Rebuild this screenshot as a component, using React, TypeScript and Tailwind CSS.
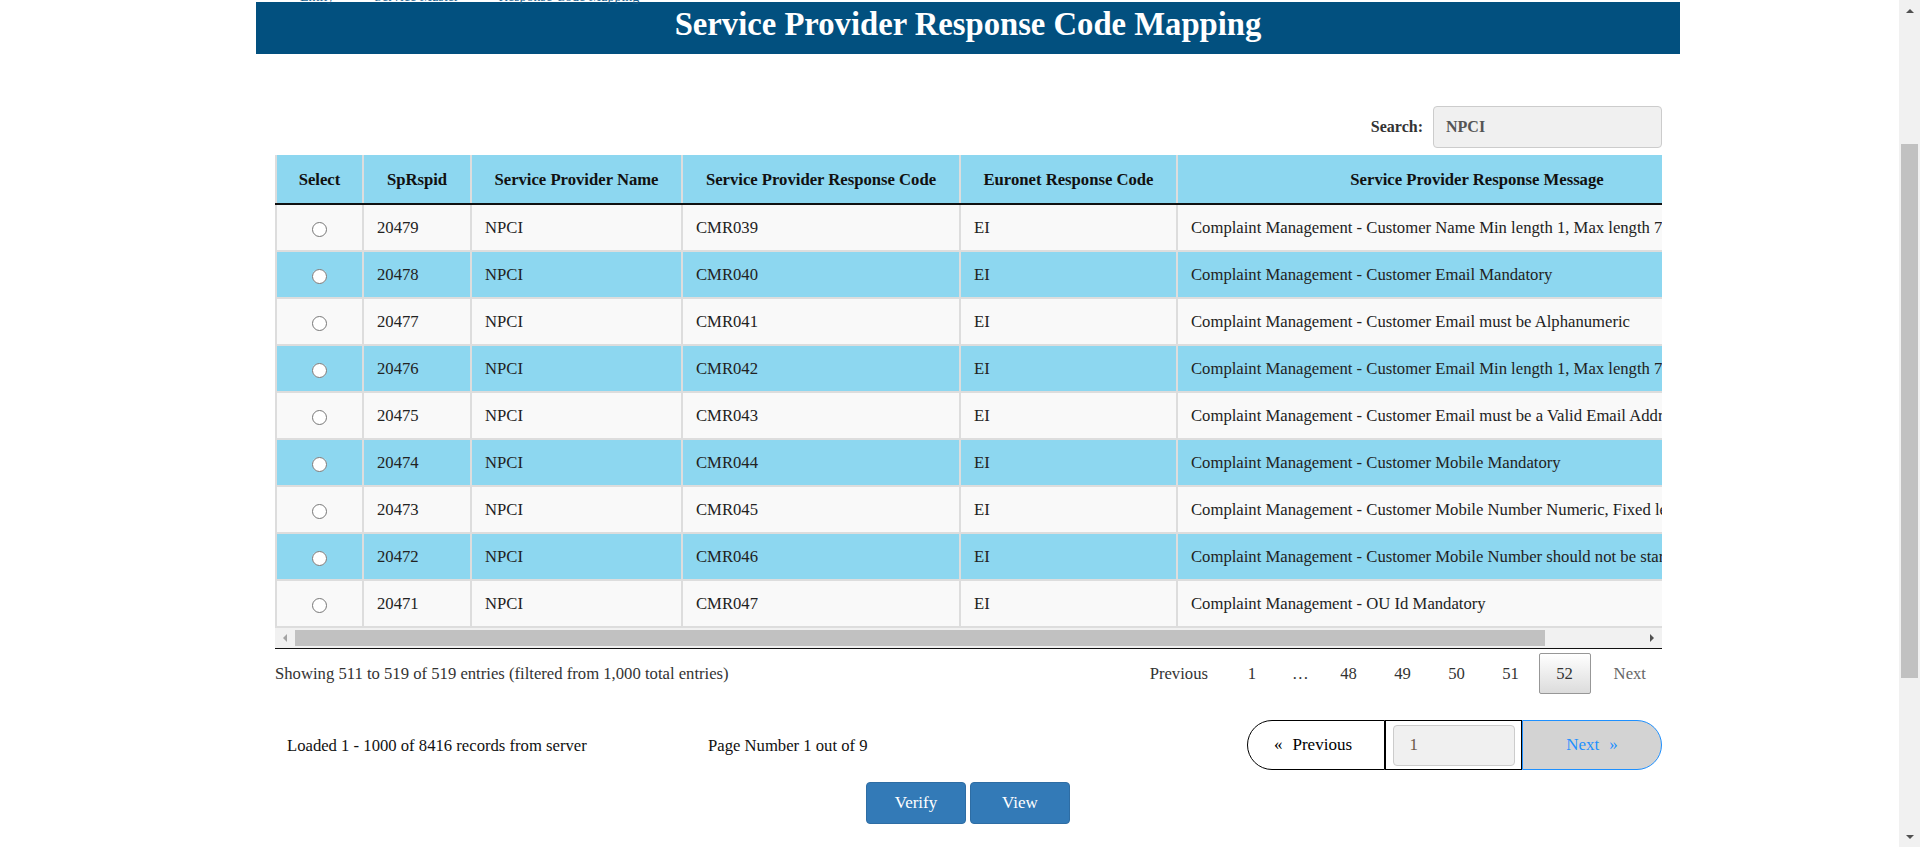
import React, { useLayoutEffect, useRef } from 'react';

const rows = [
  { id: '20479', code: 'CMR039', msg: 'Complaint Management - Customer Name Min length 1, Max length 70' },
  { id: '20478', code: 'CMR040', msg: 'Complaint Management - Customer Email Mandatory' },
  { id: '20477', code: 'CMR041', msg: 'Complaint Management - Customer Email must be Alphanumeric' },
  { id: '20476', code: 'CMR042', msg: 'Complaint Management - Customer Email Min length 1, Max length 70' },
  { id: '20475', code: 'CMR043', msg: 'Complaint Management - Customer Email must be a Valid Email Address' },
  { id: '20474', code: 'CMR044', msg: 'Complaint Management - Customer Mobile Mandatory' },
  { id: '20473', code: 'CMR045', msg: 'Complaint Management - Customer Mobile Number Numeric, Fixed length 10' },
  { id: '20472', code: 'CMR046', msg: 'Complaint Management - Customer Mobile Number should not be starting with 0' },
  { id: '20471', code: 'CMR047', msg: 'Complaint Management - OU Id Mandatory' },
];

const headers = [
  'Select',
  'SpRspid',
  'Service Provider Name',
  'Service Provider Response Code',
  'Euronet Response Code',
  'Service Provider Response Message',
];

const pages = ['1', '…', '48', '49', '50', '51'];

const Arrow = ({ dir, color }: { dir: 'up' | 'down' | 'left' | 'right'; color: string }) => {
  const pts = {
    up: '0,5 4,1 8,5',
    down: '0,1 4,5 8,1',
    left: '5,0 1,4 5,8',
    right: '1,0 5,4 1,8',
  }[dir];
  const vertical = dir === 'up' || dir === 'down';
  return (
    <svg width={vertical ? 8 : 6} height={vertical ? 6 : 8} viewBox={vertical ? '0 0 8 6' : '0 0 6 8'}>
      <polygon points={pts} fill={color} />
    </svg>
  );
};

export default function App() {
  const scroller = useRef<HTMLDivElement>(null);

  useLayoutEffect(() => {
    if (scroller.current) scroller.current.scrollTop = 201;
  }, []);

  return (
    <div className="flex h-[847px] bg-white">
      <div
        ref={scroller}
        className="flex-1 overflow-y-scroll [scrollbar-width:none] font-['Liberation_Serif',serif] text-[16.67px] text-[#222]"
      >
        {/* page top (scrolled past) */}
        <div className="h-[203px] flex items-end pl-[300px]">
          <div className="text-[14px] leading-[16px] text-[#1d5f8c] space-x-10 -mb-[3px]">
            <span>Entity</span>
            <span>Service Master</span>
            <span>Response Code Mapping</span>
          </div>
        </div>

        <div className="ml-[256px] w-[1424px]">
          <div className="h-[52px] bg-[#02507f] text-center text-white font-bold text-[32.67px] leading-[44px]">
            Service Provider Response Code Mapping
          </div>

          <div className="mt-[52px] flex items-center justify-end pr-[18px]">
            <label className="font-bold text-[16px] text-[#333] mr-[10px]">Search:</label>
            <input
              readOnly
              value="NPCI"
              className="w-[229px] h-[42px] bg-[#f0f0f0] border border-[#cccccc] rounded-[4px] px-[12px] font-bold text-[16px] text-[#555] outline-none"
            />
          </div>

          <div className="mt-[7px] ml-[19px] mr-[18px] border-b border-[#111]">
            <div className="overflow-hidden">
              <table className="table-fixed w-[1501px] border-collapse">
                <colgroup>
                  <col className="w-[87px]" />
                  <col className="w-[108px]" />
                  <col className="w-[211px]" />
                  <col className="w-[278px]" />
                  <col className="w-[217px]" />
                  <col className="w-[600px]" />
                </colgroup>
                <thead>
                  <tr className="h-[49px] bg-[#8dd7f0]">
                    {headers.map((h) => (
                      <th
                        key={h}
                        className="border-x-2 border-[#dddddd] border-b-2 border-b-[#111] font-bold text-[#111] text-center whitespace-nowrap"
                      >
                        {h}
                      </th>
                    ))}
                  </tr>
                </thead>
                <tbody>
                  {rows.map((r, i) => (
                    <tr key={r.id} className={`h-[47px] ${i % 2 === 0 ? 'bg-[#f9f9f9]' : 'bg-[#8dd7f0]'}`}>
                      <td className="border-2 border-[#dddddd] text-center">
                        <input type="radio" name="sel" className="w-[15px] h-[15px] align-middle" />
                      </td>
                      <td className="border-2 border-[#dddddd] pl-[13px] whitespace-nowrap">{r.id}</td>
                      <td className="border-2 border-[#dddddd] pl-[13px] whitespace-nowrap">NPCI</td>
                      <td className="border-2 border-[#dddddd] pl-[13px] whitespace-nowrap">{r.code}</td>
                      <td className="border-2 border-[#dddddd] pl-[13px] whitespace-nowrap">EI</td>
                      <td className="border-2 border-[#dddddd] pl-[13px] whitespace-nowrap">{r.msg}</td>
                    </tr>
                  ))}
                </tbody>
              </table>
            </div>
            {/* horizontal scrollbar */}
            <div className="h-[20px] bg-[#f1f1f1] flex items-stretch">
              <div className="w-[20px] flex items-center justify-center">
                <Arrow dir="left" color="#a3a3a3" />
              </div>
              <div className="flex-1 flex items-center">
                <div className="w-[1250px] h-[16px] bg-[#c1c1c1]" />
              </div>
              <div className="w-[20px] flex items-center justify-center">
                <Arrow dir="right" color="#505050" />
              </div>
            </div>
          </div>

          <div className="mt-[4px] ml-[19px] mr-[18px] flex items-center justify-between">
            <div className="text-[#333]">
              Showing 511 to 519 of 519 entries (filtered from 1,000 total entries)
            </div>
            <div className="flex items-center text-[#333]">
              <span className="h-[41px] px-4 flex items-center">Previous</span>
              {pages.map((p) =>
                p === '…' ? (
                  <span key={p} className="h-[41px] px-[12px] flex items-center ml-[2px]">…</span>
                ) : (
                  <span key={p} className="h-[41px] w-[52px] flex items-center justify-center ml-[2px]">
                    {p}
                  </span>
                )
              )}
              <span className="h-[41px] w-[52px] ml-[2px] flex items-center justify-center border border-[#979797] rounded-[2px] bg-gradient-to-b from-white to-[#dcdcdc]">
                52
              </span>
              <span className="h-[41px] pl-[21px] pr-4 ml-[2px] flex items-center text-[#666]">Next</span>
            </div>
          </div>

          <div className="mt-[26px] flex items-center">
            <div className="pl-[31px] w-[452px] text-[#111]">Loaded 1 - 1000 of 8416 records from server</div>
            <div className="text-[#111]">Page Number 1 out of 9</div>
            <div className="ml-auto mr-[18px] flex h-[50px]">
              <div className="w-[138px] pr-[6px] border border-black rounded-l-full flex items-center justify-center text-[17px] text-black">
                <span className="mr-[10px]">«</span>Previous
              </div>
              <div className="w-[137px] border border-black flex items-center justify-center">
                <input
                  readOnly
                  value="1"
                  className="w-[122px] h-[41px] bg-[#f0f0f0] border border-[#cccccc] rounded-[4px] px-[16px] text-[17px] text-[#6b5a4a] outline-none"
                />
              </div>
              <div className="w-[140px] bg-[#d3d3d3] border border-[#1e90ff] rounded-r-full flex items-center justify-center text-[17px] text-[#1e90ff]">
                Next<span className="ml-[10px]">»</span>
              </div>
            </div>
          </div>

          <div className="mt-[12px] flex justify-center gap-[4px]">
            <button className="w-[100px] h-[42px] bg-[#337ab7] border border-[#2e6da4] rounded-[4px] text-white text-[17px]">
              Verify
            </button>
            <button className="w-[100px] h-[42px] bg-[#337ab7] border border-[#2e6da4] rounded-[4px] text-white text-[17px]">
              View
            </button>
          </div>

          <div className="h-[263px]" />
        </div>
      </div>

      {/* page scrollbar */}
      <div className="w-[21px] bg-[#f1f1f1] flex flex-col items-center">
        <div className="h-[21px] flex items-center justify-center">
          <Arrow dir="up" color="#505050" />
        </div>
        <div className="mt-[123px] w-[17px] h-[534px] bg-[#c1c1c1]" />
        <div className="flex-1" />
        <div className="h-[21px] flex items-center justify-center">
          <Arrow dir="down" color="#505050" />
        </div>
      </div>
    </div>
  );
}
